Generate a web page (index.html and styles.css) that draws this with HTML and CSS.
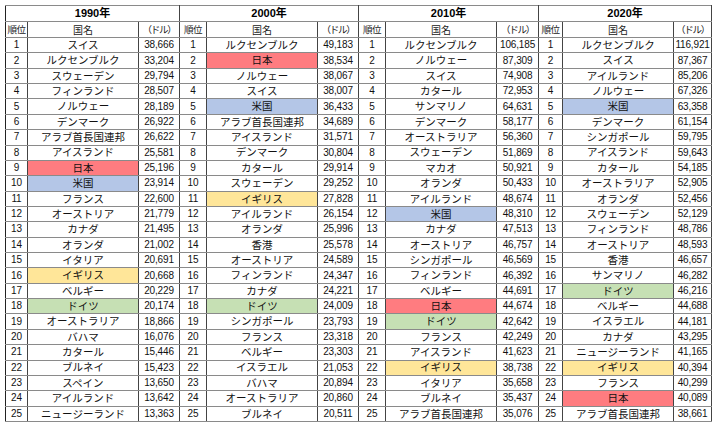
FILE: index.html
```html
<!DOCTYPE html>
<html lang="ja">
<head>
<meta charset="utf-8">
<link rel="stylesheet" href="styles.css">
</head>
<body>
<table class="gdp">
<colgroup>
<col class="c-rank1"><col class="c-name"><col class="c-val1">
<col class="c-rank"><col class="c-name"><col class="c-val">
<col class="c-rank"><col class="c-name"><col class="c-val3">
<col class="c-rank4"><col class="c-name"><col class="c-val4">
</colgroup>
<thead>
<tr class="year">
<th colspan="3" class="grp">1990年</th>
<th colspan="3" class="grp">2000年</th>
<th colspan="3" class="grp">2010年</th>
<th colspan="3" class="grp">2020年</th>
</tr>
<tr class="sub">
<th class="rank grp">順位</th><th>国名</th><th class="unit">（ドル）</th>
<th class="rank grp">順位</th><th>国名</th><th class="unit">（ドル）</th>
<th class="rank grp">順位</th><th>国名</th><th class="unit">（ドル）</th>
<th class="rank grp">順位</th><th>国名</th><th class="unit">（ドル）</th>
</tr>
</thead>
<tbody>
<tr>
<td class="rank grp">1</td><td class="name">スイス</td><td class="val">38,666</td>
<td class="rank grp">1</td><td class="name">ルクセンブルク</td><td class="val">49,183</td>
<td class="rank grp">1</td><td class="name">ルクセンブルク</td><td class="val">106,185</td>
<td class="rank grp">1</td><td class="name">ルクセンブルク</td><td class="val">116,921</td>
</tr>
<tr>
<td class="rank grp">2</td><td class="name">ルクセンブルク</td><td class="val">33,204</td>
<td class="rank grp">2</td><td class="name jp">日本</td><td class="val">38,534</td>
<td class="rank grp">2</td><td class="name">ノルウェー</td><td class="val">87,309</td>
<td class="rank grp">2</td><td class="name">スイス</td><td class="val">87,367</td>
</tr>
<tr>
<td class="rank grp">3</td><td class="name">スウェーデン</td><td class="val">29,794</td>
<td class="rank grp">3</td><td class="name">ノルウェー</td><td class="val">38,067</td>
<td class="rank grp">3</td><td class="name">スイス</td><td class="val">74,908</td>
<td class="rank grp">3</td><td class="name">アイルランド</td><td class="val">85,206</td>
</tr>
<tr>
<td class="rank grp">4</td><td class="name">フィンランド</td><td class="val">28,507</td>
<td class="rank grp">4</td><td class="name">スイス</td><td class="val">38,007</td>
<td class="rank grp">4</td><td class="name">カタール</td><td class="val">72,953</td>
<td class="rank grp">4</td><td class="name">ノルウェー</td><td class="val">67,326</td>
</tr>
<tr>
<td class="rank grp">5</td><td class="name">ノルウェー</td><td class="val">28,189</td>
<td class="rank grp">5</td><td class="name us">米国</td><td class="val">36,433</td>
<td class="rank grp">5</td><td class="name">サンマリノ</td><td class="val">64,631</td>
<td class="rank grp">5</td><td class="name us">米国</td><td class="val">63,358</td>
</tr>
<tr>
<td class="rank grp">6</td><td class="name">デンマーク</td><td class="val">26,922</td>
<td class="rank grp">6</td><td class="name">アラブ首長国連邦</td><td class="val">34,689</td>
<td class="rank grp">6</td><td class="name">デンマーク</td><td class="val">58,177</td>
<td class="rank grp">6</td><td class="name">デンマーク</td><td class="val">61,154</td>
</tr>
<tr>
<td class="rank grp">7</td><td class="name">アラブ首長国連邦</td><td class="val">26,622</td>
<td class="rank grp">7</td><td class="name">アイスランド</td><td class="val">31,571</td>
<td class="rank grp">7</td><td class="name">オーストラリア</td><td class="val">56,360</td>
<td class="rank grp">7</td><td class="name">シンガポール</td><td class="val">59,795</td>
</tr>
<tr>
<td class="rank grp">8</td><td class="name">アイスランド</td><td class="val">25,581</td>
<td class="rank grp">8</td><td class="name">デンマーク</td><td class="val">30,804</td>
<td class="rank grp">8</td><td class="name">スウェーデン</td><td class="val">51,869</td>
<td class="rank grp">8</td><td class="name">アイスランド</td><td class="val">59,643</td>
</tr>
<tr>
<td class="rank grp">9</td><td class="name jp">日本</td><td class="val">25,196</td>
<td class="rank grp">9</td><td class="name">カタール</td><td class="val">29,914</td>
<td class="rank grp">9</td><td class="name">マカオ</td><td class="val">50,921</td>
<td class="rank grp">9</td><td class="name">カタール</td><td class="val">54,185</td>
</tr>
<tr>
<td class="rank grp">10</td><td class="name us">米国</td><td class="val">23,914</td>
<td class="rank grp">10</td><td class="name">スウェーデン</td><td class="val">29,252</td>
<td class="rank grp">10</td><td class="name">オランダ</td><td class="val">50,433</td>
<td class="rank grp">10</td><td class="name">オーストラリア</td><td class="val">52,905</td>
</tr>
<tr>
<td class="rank grp">11</td><td class="name">フランス</td><td class="val">22,600</td>
<td class="rank grp">11</td><td class="name uk">イギリス</td><td class="val">27,828</td>
<td class="rank grp">11</td><td class="name">アイルランド</td><td class="val">48,674</td>
<td class="rank grp">11</td><td class="name">オランダ</td><td class="val">52,456</td>
</tr>
<tr>
<td class="rank grp">12</td><td class="name">オーストリア</td><td class="val">21,779</td>
<td class="rank grp">12</td><td class="name">アイルランド</td><td class="val">26,154</td>
<td class="rank grp">12</td><td class="name us">米国</td><td class="val">48,310</td>
<td class="rank grp">12</td><td class="name">スウェーデン</td><td class="val">52,129</td>
</tr>
<tr>
<td class="rank grp">13</td><td class="name">カナダ</td><td class="val">21,495</td>
<td class="rank grp">13</td><td class="name">オランダ</td><td class="val">25,996</td>
<td class="rank grp">13</td><td class="name">カナダ</td><td class="val">47,513</td>
<td class="rank grp">13</td><td class="name">フィンランド</td><td class="val">48,786</td>
</tr>
<tr>
<td class="rank grp">14</td><td class="name">オランダ</td><td class="val">21,002</td>
<td class="rank grp">14</td><td class="name">香港</td><td class="val">25,578</td>
<td class="rank grp">14</td><td class="name">オーストリア</td><td class="val">46,757</td>
<td class="rank grp">14</td><td class="name">オーストリア</td><td class="val">48,593</td>
</tr>
<tr>
<td class="rank grp">15</td><td class="name">イタリア</td><td class="val">20,691</td>
<td class="rank grp">15</td><td class="name">オーストリア</td><td class="val">24,589</td>
<td class="rank grp">15</td><td class="name">シンガポール</td><td class="val">46,569</td>
<td class="rank grp">15</td><td class="name">香港</td><td class="val">46,657</td>
</tr>
<tr>
<td class="rank grp">16</td><td class="name uk">イギリス</td><td class="val">20,668</td>
<td class="rank grp">16</td><td class="name">フィンランド</td><td class="val">24,347</td>
<td class="rank grp">16</td><td class="name">フィンランド</td><td class="val">46,392</td>
<td class="rank grp">16</td><td class="name">サンマリノ</td><td class="val">46,282</td>
</tr>
<tr>
<td class="rank grp">17</td><td class="name">ベルギー</td><td class="val">20,229</td>
<td class="rank grp">17</td><td class="name">カナダ</td><td class="val">24,221</td>
<td class="rank grp">17</td><td class="name">ベルギー</td><td class="val">44,691</td>
<td class="rank grp">17</td><td class="name de">ドイツ</td><td class="val">46,216</td>
</tr>
<tr>
<td class="rank grp">18</td><td class="name de">ドイツ</td><td class="val">20,174</td>
<td class="rank grp">18</td><td class="name de">ドイツ</td><td class="val">24,009</td>
<td class="rank grp">18</td><td class="name jp">日本</td><td class="val">44,674</td>
<td class="rank grp">18</td><td class="name">ベルギー</td><td class="val">44,688</td>
</tr>
<tr>
<td class="rank grp">19</td><td class="name">オーストラリア</td><td class="val">18,866</td>
<td class="rank grp">19</td><td class="name">シンガポール</td><td class="val">23,793</td>
<td class="rank grp">19</td><td class="name de">ドイツ</td><td class="val">42,642</td>
<td class="rank grp">19</td><td class="name">イスラエル</td><td class="val">44,181</td>
</tr>
<tr>
<td class="rank grp">20</td><td class="name">バハマ</td><td class="val">16,076</td>
<td class="rank grp">20</td><td class="name">フランス</td><td class="val">23,318</td>
<td class="rank grp">20</td><td class="name">フランス</td><td class="val">42,249</td>
<td class="rank grp">20</td><td class="name">カナダ</td><td class="val">43,295</td>
</tr>
<tr>
<td class="rank grp">21</td><td class="name">カタール</td><td class="val">15,446</td>
<td class="rank grp">21</td><td class="name">ベルギー</td><td class="val">23,303</td>
<td class="rank grp">21</td><td class="name">アイスランド</td><td class="val">41,623</td>
<td class="rank grp">21</td><td class="name">ニュージーランド</td><td class="val">41,165</td>
</tr>
<tr>
<td class="rank grp">22</td><td class="name">ブルネイ</td><td class="val">15,423</td>
<td class="rank grp">22</td><td class="name">イスラエル</td><td class="val">21,053</td>
<td class="rank grp">22</td><td class="name uk">イギリス</td><td class="val">38,738</td>
<td class="rank grp">22</td><td class="name uk">イギリス</td><td class="val">40,394</td>
</tr>
<tr>
<td class="rank grp">23</td><td class="name">スペイン</td><td class="val">13,650</td>
<td class="rank grp">23</td><td class="name">バハマ</td><td class="val">20,894</td>
<td class="rank grp">23</td><td class="name">イタリア</td><td class="val">35,658</td>
<td class="rank grp">23</td><td class="name">フランス</td><td class="val">40,299</td>
</tr>
<tr>
<td class="rank grp">24</td><td class="name">アイルランド</td><td class="val">13,642</td>
<td class="rank grp">24</td><td class="name">オーストラリア</td><td class="val">20,860</td>
<td class="rank grp">24</td><td class="name">ブルネイ</td><td class="val">35,437</td>
<td class="rank grp">24</td><td class="name jp">日本</td><td class="val">40,089</td>
</tr>
<tr>
<td class="rank grp">25</td><td class="name">ニュージーランド</td><td class="val">13,363</td>
<td class="rank grp">25</td><td class="name">ブルネイ</td><td class="val">20,511</td>
<td class="rank grp">25</td><td class="name">アラブ首長国連邦</td><td class="val">35,076</td>
<td class="rank grp">25</td><td class="name">アラブ首長国連邦</td><td class="val">38,661</td>
</tr>
</tbody>
</table>
</body>
</html>
```
FILE: styles.css
```css
html, body {
  margin: 0;
  padding: 0;
  background: #ffffff;
}

body {
  padding: 5px 0 0 5px;
}

.gdp {
  border-collapse: collapse;
  table-layout: fixed;
  width: 707px;
  font-family: "Liberation Sans", "Noto Sans CJK JP", sans-serif;
  color: #000;
  border: 1px solid #333;
}

.c-rank1 { width: 22px; }
.c-rank { width: 27px; }
.c-rank4 { width: 24px; }
.c-name { width: 111px; }
.c-val1 { width: 41px; }
.c-val { width: 41px; }
.c-val3 { width: 42px; }
.c-val4 { width: 38px; }

.gdp th,
.gdp td {
  padding: 0;
  text-align: center;
  vertical-align: middle;
  border-top: 1px solid #8a8a8a;
  border-bottom: 1px solid #8a8a8a;
  border-left: 1px solid #444;
  border-right: 1px solid #444;
  white-space: nowrap;
  overflow: hidden;
  line-height: 1;
}

.gdp .grp {
  border-left: 1px solid #222;
}

.year th {
  height: 15px;
  font-family: "Liberation Sans", "Noto Sans CJK JP", sans-serif;
  font-weight: bold;
  font-size: 11px;
}

.sub th {
  height: 15px;
  font-family: "Noto Sans CJK JP", sans-serif;
  font-weight: normal;
  font-size: 10px;
  color: #222;
}

.sub th.rank {
  font-size: 9.5px;
  letter-spacing: -0.5px;
}

.sub th.unit {
  font-size: 9.5px;
  letter-spacing: -1.2px;
}

tbody td {
  height: 14.36px;
}

td.rank,
td.val {
  font-family: "Liberation Sans", sans-serif;
  font-size: 10px;
  letter-spacing: -0.15px;
  color: #111;
}

td.name {
  font-family: "Noto Sans CJK JP", sans-serif;
  font-size: 10.5px;
  color: #111;
}

td.jp { background: #ff7c80; }
td.us { background: #b4c6e7; }
td.uk { background: #ffe699; }
td.de { background: #c6e0b4; }
```
